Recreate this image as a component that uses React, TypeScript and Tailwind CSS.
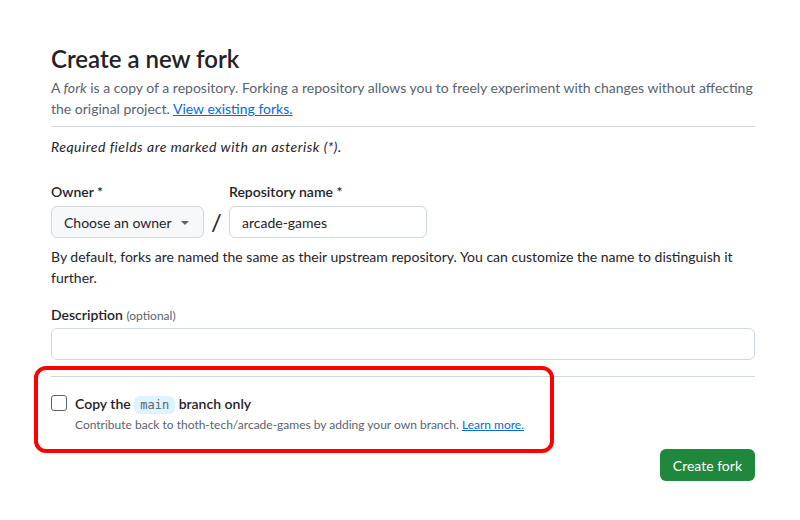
import React from 'react';

const Caret: React.FC = () => (
    <svg width="16" height="16" viewBox="0 0 16 16" className="fill-[#59636e]">
        <path d="m4.427 7.427 3.396 3.396a.25.25 0 0 0 .354 0l3.396-3.396A.25.25 0 0 0 11.396 7H4.604a.25.25 0 0 0-.177.427Z" />
    </svg>
);

const App: React.FC = () => {
    return (
        <div className="relative w-[800px] h-[520px] bg-white text-[#1f2328] font-['Lato',sans-serif] overflow-hidden">
            <div className="ml-[51px] w-[704px] pt-[44px]">
                <h1 className="text-[24px] leading-[30px] font-semibold">Create a new fork</h1>
                <p className="mt-[3px] text-[14px] leading-[21px] text-[#59636e]">
                    A <em>fork</em> is a copy of a repository. Forking a repository allows you to freely experiment with changes without affecting the original project.{' '}
                    <a href="#" className="text-[#0969da] underline">View existing forks.</a>
                </p>
                <div className="mt-[7px] border-t border-[#d1d9e0]" />

                <p className="mt-[9px] text-[14px] leading-[21px] italic tracking-[0.5px]">Required fields are marked with an asterisk (*).</p>

                <div className="mt-[24px] flex items-start">
                    <div className="flex flex-col">
                        <label className="text-[14px] leading-[21px] font-semibold">Owner *</label>
                        <button className="mt-[4px] w-[153px] h-[32px] flex items-center justify-between pl-[12px] pr-[10px] bg-[#f6f8fa] border border-[#d1d9e0] rounded-[6px] text-[14px] whitespace-nowrap">
                            <span>Choose an owner</span>
                            <Caret />
                        </button>
                    </div>
                    <span className="self-end h-[32px] w-[25px] flex items-center justify-center text-[24px] leading-none">/</span>
                    <div className="flex flex-col">
                        <label className="text-[14px] leading-[21px] font-semibold">Repository name *</label>
                        <input
                            type="text"
                            defaultValue="arcade-games"
                            className="mt-[4px] w-[198px] h-[32px] px-[12px] border border-[#d1d9e0] rounded-[6px] text-[14px] outline-none"
                        />
                    </div>
                </div>
                <p className="mt-[8px] text-[14px] leading-[21px]">
                    By default, forks are named the same as their upstream repository. You can customize the name to distinguish it further.
                </p>

                <label className="mt-[16px] block text-[14px] leading-[21px] font-semibold">
                    Description <span className="text-[12px] font-normal text-[#59636e]">(optional)</span>
                </label>
                <input
                    type="text"
                    className="mt-[2px] block w-full h-[32px] px-[12px] border border-[#d1d9e0] rounded-[6px] text-[14px] outline-none"
                />
                <div className="mt-[16px] border-t border-[#d1d9e0]" />

                <div className="mt-[16px] flex items-start gap-[8px]">
                    <input type="checkbox" className="mt-[2px] w-[16px] h-[16px] appearance-none border border-[#59636e] rounded-[3px] bg-white" />
                    <div>
                        <div className="text-[14px] leading-[21px] font-semibold">
                            Copy the{' '}
                            <code className="px-[6px] py-[2px] rounded-[6px] bg-[#ddf4ff] text-[#59636e] text-[12px] font-normal font-['DejaVu_Sans_Mono',monospace]">main</code>{' '}
                            branch only
                        </div>
                        <div className="text-[12px] leading-[18px] text-[#59636e]">
                            Contribute back to thoth-tech/arcade-games by adding your own branch.{' '}
                            <a href="#" className="text-[#0969da] underline">Learn more.</a>
                        </div>
                    </div>
                </div>

                <div className="mt-[15px] flex justify-end">
                    <button className="h-[32px] px-[13px] rounded-[6px] bg-[#1f883d] text-white text-[14px]">Create fork</button>
                </div>
            </div>

            {/* red annotation box */}
            <div className="absolute left-[34px] top-[366px] w-[520px] h-[87px] border-4 border-[#ff0000] rounded-[12px] pointer-events-none" />
        </div>
    );
};

export default App;
